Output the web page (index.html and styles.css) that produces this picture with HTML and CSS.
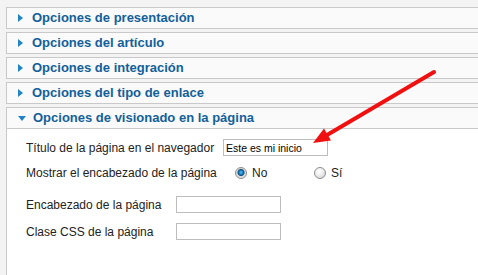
FILE: index.html
```html
<!DOCTYPE html>
<html lang="es">
<head>
  <meta charset="UTF-8" />
  <title>Opciones del menú</title>
  <link rel="stylesheet" href="styles.css">
</head>
<body>
  <div class="paramPanes">
    <div class="pane">
      <h3 class="pane-toggler"><span class="arrow"></span>Opciones de presentación</h3>
    </div>
    <div class="pane">
      <h3 class="pane-toggler"><span class="arrow"></span>Opciones del artículo</h3>
    </div>
    <div class="pane">
      <h3 class="pane-toggler"><span class="arrow"></span>Opciones de integración</h3>
    </div>
    <div class="pane">
      <h3 class="pane-toggler"><span class="arrow"></span>Opciones del tipo de enlace</h3>
    </div>
    <div class="pane open">
      <h3 class="pane-toggler"><span class="arrow"></span>Opciones de visionado en la página</h3>
      <div class="pane-content">
        <div class="param-row row-title">
          <label for="pageTitle">Título de la página en el navegador</label>
          <input type="text" id="pageTitle" value="Este es mi inicio" />
        </div>

        <div class="param-row row-heading">
          <span class="label">Mostrar el encabezado de la página</span>
          <label class="option"><input type="radio" name="showHeading" checked />No</label>
          <label class="option"><input type="radio" name="showHeading" />Sí</label>
        </div>

        <div class="param-row row-short">
          <label for="pageHeading">Encabezado de la página</label>
          <input type="text" id="pageHeading" />
        </div>

        <div class="param-row row-short">
          <label for="pageClass">Clase CSS de la página</label>
          <input type="text" id="pageClass" />
        </div>
      </div>
    </div>
  </div>

  <!-- flecha roja que señala el campo del título -->
  <svg class="callout" width="478" height="275" viewBox="0 0 478 275">
    <line x1="434" y1="72" x2="327" y2="135" stroke="#f01010" stroke-width="4" stroke-linecap="round" />
    <polygon points="313,143 331,140.5 324,128.5" fill="#f01010" />
  </svg>
</body>
</html>
```

FILE: styles.css
```css
body {
  margin: 0;
  background-color: #f3f3f3;
  font-family: "Liberation Sans", Arial, sans-serif;
  font-size: 12px;
  color: #222;
  overflow: hidden;
}

.paramPanes {
  padding: 7px 0 0 6px;
  margin-right: -20px;
}

.pane {
  border: 1px solid #c9c9c9;
  border-right: none;
  background-color: #fafafa;
  margin-bottom: 3px;
}

.pane-toggler {
  margin: 0;
  height: 20px;
  line-height: 20px;
  font-size: 13px;
  font-weight: bold;
  color: #12609a;
  display: flex;
  align-items: center;
}

.pane-toggler .arrow {
  width: 0;
  height: 0;
  margin-left: 11px;
  margin-right: 9px;
  border-top: 4px solid transparent;
  border-bottom: 4px solid transparent;
  border-left: 5px solid #2084c6;
}

.pane.open .pane-toggler {
  border-bottom: 1px solid #c9c9c9;
}

.pane.open .pane-toggler .arrow {
  margin-left: 11px;
  margin-right: 7px;
  border-left: 4px solid transparent;
  border-right: 4px solid transparent;
  border-top: 5px solid #2084c6;
  border-bottom: none;
}

.pane-content {
  background-color: #fff;
  padding: 10px 0 31px 19px;
}

.param-row {
  display: flex;
  align-items: center;
  line-height: 14px;
}

.param-row input[type="text"] {
  width: 105px;
  height: 17px;
  box-sizing: border-box;
  border: 1px solid #bdbdbd;
  padding: 0 2px;
  margin: 0;
  font-family: "Liberation Sans", Arial, sans-serif;
  font-size: 10.5px;
  color: #000;
  background: #fff;
}

.row-title {
  margin-bottom: 10px;
}

.row-title label {
  width: 197px;
}

.row-heading {
  height: 14px;
  margin-bottom: 16px;
}

.row-heading .label {
  width: 209px;
}

.row-heading .option {
  width: 79px;
  display: flex;
  align-items: center;
  gap: 5px;
}

.row-short {
  margin-bottom: 10px;
}

.row-short label {
  width: 150px;
}

.option input[type="radio"] {
  appearance: none;
  width: 12px;
  height: 12px;
  margin: 0;
  border: 1px solid #8e8e8e;
  border-radius: 50%;
  background: radial-gradient(circle at 40% 35%, #ffffff 0, #f0f0f0 40%, #c9c9c9 100%);
}

.option input[type="radio"]:checked {
  background: radial-gradient(circle at 50% 45%, #5cc0f0 0, #1a7fc0 2px, #0b4f80 3px, #d8d8d8 4px, #f4f4f4 100%);
}

.callout {
  position: absolute;
  left: 0;
  top: 0;
  pointer-events: none;
}
```
